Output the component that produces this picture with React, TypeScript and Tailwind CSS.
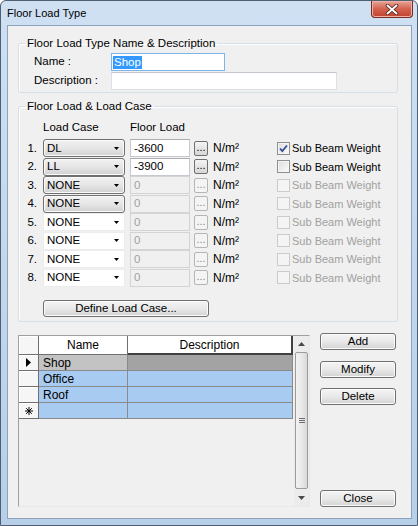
import React from 'react'

const loadRows = [
  { lc: 'DL', v: '-3600', on: true, chk: true, btnCombo: true },
  { lc: 'LL', v: '-3900', on: true, chk: false, btnCombo: true },
  { lc: 'NONE', v: '0', on: false, chk: false, btnCombo: true },
  { lc: 'NONE', v: '0', on: false, chk: false, btnCombo: true },
  { lc: 'NONE', v: '0', on: false, chk: false, btnCombo: false },
  { lc: 'NONE', v: '0', on: false, chk: false, btnCombo: false },
  { lc: 'NONE', v: '0', on: false, chk: false, btnCombo: false },
  { lc: 'NONE', v: '0', on: false, chk: false, btnCombo: false },
]

const gridRows = [
  { name: 'Shop', mark: 'current' },
  { name: 'Office', mark: '' },
  { name: 'Roof', mark: '' },
  { name: '', mark: 'new' },
]

function Button({ children, className = '' }: { children: React.ReactNode; className?: string }) {
  return (
    <div
      className={`flex items-center justify-center rounded-[3px] border border-[#707070] bg-linear-to-b from-[#f4f4f4] via-[#e9e9e9] to-[#d3d3d3] text-[11.5px] text-black shadow-[inset_0_0_0_1px_#fbfbfb] ${className}`}
    >
      {children}
    </div>
  )
}

function DownArrow() {
  return (
    <svg width="5" height="3" viewBox="0 0 5 3">
      <path d="M0 0h5L2.5 3z" fill="#000" />
    </svg>
  )
}

function Checkbox({ on, checked }: { on: boolean; checked: boolean }) {
  return (
    <div
      className={`flex h-[13px] w-[13px] items-center justify-center border ${
        on
          ? 'border-[#8e8f8f] bg-linear-to-br from-[#dcdcdc] to-[#fbfbfb] shadow-[inset_0_0_0_1px_#f4f4f4]'
          : 'border-[#cbcbcb] bg-[#f4f4f4]'
      }`}
    >
      {checked && (
        <svg width="11" height="11" viewBox="0 0 11 11">
          <path d="M2 5.5l2.3 2.6L9 2.5" fill="none" stroke="#2d4b95" strokeWidth="1.7" />
        </svg>
      )}
    </div>
  )
}

function LoadRow({ n, row }: { n: number; row: (typeof loadRows)[number] }) {
  return (
    <div className="flex h-[18.5px] items-center">
      <span className="w-[18px] text-right">{n}.</span>
      <div
        className={`ml-[6px] flex h-[18px] w-[82px] items-center justify-between pl-[3px] pr-[5px] ${
          row.btnCombo
            ? 'rounded-[3px] border border-[#707070] bg-linear-to-b from-[#f2f2f2] via-[#e6e6e6] to-[#d1d1d1] shadow-[inset_0_0_0_1px_#fafafa]'
            : 'border border-[#ececec] bg-white'
        }`}
      >
        <span>{row.lc}</span>
        <DownArrow />
      </div>
      <div
        className={`ml-[5px] flex h-[18px] w-[60px] items-center border pl-[3px] ${
          row.on
            ? 'border-[#c6c9cf] border-t-[#abadb3] bg-white text-black'
            : 'border-[#d4d4d4] bg-[#f0f0f0] text-[#a0a0a0]'
        }`}
      >
        {row.v}
      </div>
      <div
        className={`ml-[4px] flex h-[15px] w-[14px] items-end justify-center rounded-[2px] border pb-[2px] text-[11px] leading-none ${
          row.on
            ? 'border-[#707070] bg-linear-to-b from-[#f4f4f4] to-[#d6d6d6] text-black'
            : 'border-[#b5b5b5] bg-[#f4f4f4] text-[#8a8a8a]'
        }`}
      >
        ...
      </div>
      <span className="ml-[5px] w-[64px] text-[12px]">N/m²</span>
      <Checkbox on={row.on} checked={row.chk} />
      <span className={`ml-[2px] text-[11px] ${row.on ? 'text-black' : 'text-[#a0a0a0]'}`}>Sub Beam Weight</span>
    </div>
  )
}

function Indicator({ mark }: { mark: string }) {
  return (
    <div className="flex h-full w-[20px] items-center justify-center border-r border-b border-[#6f6f6f] bg-[#f6f6f6] shadow-[inset_1px_1px_0_#ffffff]">
      {mark === 'current' && (
        <svg width="5" height="9" viewBox="0 0 5 9">
          <path d="M0 0l5 4.5L0 9z" fill="#000" />
        </svg>
      )}
      {mark === 'new' && (
        <svg width="8" height="8" viewBox="0 0 8 8">
          <path d="M4 0v8M0 4h8M1.2 1.2l5.6 5.6M6.8 1.2L1.2 6.8" stroke="#000" strokeWidth="1" />
        </svg>
      )}
    </div>
  )
}

function Scrollbar() {
  return (
    <div className="flex h-full w-[15px] flex-col bg-[#ececec]">
      <div className="flex h-[16px] items-center justify-center">
        <svg width="7" height="4" viewBox="0 0 7 4">
          <path d="M0 4L3.5 0L7 4z" fill="#4a4a4a" />
        </svg>
      </div>
      <div className="mx-[1px] flex flex-1 items-center justify-center rounded-[2px] border border-[#9b9b9b] bg-linear-to-r from-[#f2f2f2] via-[#e9e9e9] to-[#d9d9d9]">
        <div className="flex flex-col gap-[1px]">
          <div className="h-px w-[6px] bg-[#6f6f6f]" />
          <div className="h-px w-[6px] bg-[#6f6f6f]" />
          <div className="h-px w-[6px] bg-[#6f6f6f]" />
        </div>
      </div>
      <div className="flex h-[17px] items-center justify-center">
        <svg width="7" height="4" viewBox="0 0 7 4">
          <path d="M0 0h7L3.5 4z" fill="#4a4a4a" />
        </svg>
      </div>
    </div>
  )
}

export default function App() {
  return (
    <div className="h-[526px] w-[418px] bg-white font-['Liberation_Sans',Arial,sans-serif] text-black">
      <div className="flex h-[526px] w-[418px] flex-col rounded-t-[6px] border border-[#4f5f72] bg-linear-to-b from-[#cfe0f3] to-[#b7cfe9]">
        {/* title bar */}
        <div className="flex h-[24px] items-start justify-between">
          <span className="ml-[6px] mt-[5px] text-[11px] leading-[14px]">Floor Load Type</span>
          <div className="mr-[4px] flex h-[17px] w-[42px] items-center justify-center rounded-b-[4px] border border-t-0 border-[#7a2b22] bg-linear-to-b from-[#e7a596] via-[#d2614f] to-[#c3412f] shadow-[inset_0_0_0_1px_#eeb2a6]">
            <svg width="14" height="11" viewBox="0 0 14 11">
              <path d="M2.5 1.5l9 8M11.5 1.5l-9 8" stroke="#4a1c16" strokeWidth="3.6" strokeLinecap="round" />
              <path d="M2.5 1.5l9 8M11.5 1.5l-9 8" stroke="#ffffff" strokeWidth="2" strokeLinecap="round" />
            </svg>
          </div>
        </div>

        {/* client area */}
        <div className="ml-[6px] flex h-[494px] w-[405px] flex-col border border-[#8ca3bb] bg-[#f0f0f0] text-[11.5px]">
          <fieldset className="ml-[10px] mt-[10px] w-[380px] rounded-[3px] border border-[#d5dfe5] pb-[2px] shadow-[inset_1px_1px_0_#ffffff]">
            <legend className="ml-[6px] px-[2px] leading-[15px]">Floor Load Type Name &amp; Description</legend>
            <div className="mt-[2px] flex h-[18px] items-center">
              <span className="w-[92px] pl-[15px]">Name :</span>
              <div className="flex h-[18px] w-[114px] items-center border border-[#7eb4ea] bg-white pl-[1px]">
                <span className="bg-[#3399ff] px-px text-white leading-[13px]">Shop</span>
              </div>
            </div>
            <div className="mt-[1px] flex h-[18px] items-center">
              <span className="w-[92px] pl-[15px]">Description :</span>
              <div className="h-[18px] w-[226px] border border-[#dde1e6] border-t-[#c2c5cb] bg-white" />
            </div>
          </fieldset>

          <fieldset className="ml-[10px] mt-[6px] w-[380px] rounded-[3px] border border-[#d5dfe5] pb-[4px] shadow-[inset_1px_1px_0_#ffffff]">
            <legend className="ml-[6px] px-[2px] leading-[15px]">Floor Load &amp; Load Case</legend>
            <div className="mt-[6px] flex h-[15px] items-center">
              <span className="ml-[24px] w-[87px]">Load Case</span>
              <span>Floor Load</span>
            </div>
            <div className="mt-[4px] flex flex-col">
              {loadRows.map((r, i) => (
                <LoadRow key={i} n={i + 1} row={r} />
              ))}
            </div>
            <Button className="ml-[24px] mt-[13px] h-[17px] w-[166px]">Define Load Case...</Button>
          </fieldset>

          <div className="ml-[10px] mt-[11px] flex">
            <div className="mt-[2px] flex h-[172px] w-[292px] border border-[#a0a0a0] border-r-[#e8e8e8] border-b-[#e8e8e8] text-[12px]">
              <div className="flex w-[275px] flex-col">
                <div className="flex h-[19px]">
                  <Indicator mark="" />
                  <div className="flex w-[89px] items-center justify-center border-r border-b border-[#6f6f6f] bg-white">
                    Name
                  </div>
                  <div className="flex w-[165px] items-center justify-center border-r-2 border-b-2 border-[#404040] bg-white">
                    Description
                  </div>
                </div>
                {gridRows.map((g, i) => (
                  <div key={i} className="flex h-[16px]">
                    <Indicator mark={g.mark} />
                    <div
                      className={`flex w-[89px] items-center border-r border-b border-[#8a8a8a] pl-[4px] ${
                        i === 0 ? 'bg-[#c3c3c3]' : 'bg-[#a8cbf1]'
                      }`}
                    >
                      {g.name}
                    </div>
                    <div
                      className={`w-[165px] border-r border-b border-[#8a8a8a] ${
                        i === 0 ? 'bg-[#a3a3a3]' : 'bg-[#a8cbf1]'
                      }`}
                    />
                  </div>
                ))}
              </div>
              <Scrollbar />
            </div>

            <div className="ml-[10px] flex h-[174px] w-[76px] flex-col">
              <Button className="h-[17px]">Add</Button>
              <Button className="mt-[11px] h-[17px]">Modify</Button>
              <Button className="mt-[10px] h-[17px]">Delete</Button>
              <Button className="mt-auto h-[17px]">Close</Button>
            </div>
          </div>
        </div>
      </div>
    </div>
  )
}
